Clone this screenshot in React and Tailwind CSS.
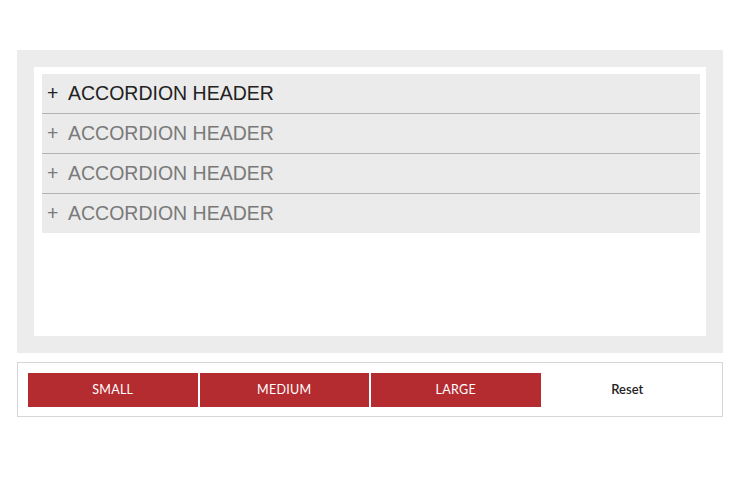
import React, { useState } from "react";

const headers = ["ACCORDION HEADER", "ACCORDION HEADER", "ACCORDION HEADER", "ACCORDION HEADER"];
const sizes = ["SMALL", "MEDIUM", "LARGE"];

const App = () => {
  const [active, setActive] = useState(0);

  return (
    <div className="w-[750px] h-[480px] bg-white pt-[50px] pl-[17px]">
      <div className="w-[706px]">
        {/* accordion frame */}
        <div className="h-[303px] bg-[#ececec] p-[17px]">
          <div className="h-full bg-white pt-[7px] pl-[8px] pr-[6px]">
            <ul>
              {headers.map((h, i) => (
                <li
                  key={i}
                  onClick={() => setActive(i)}
                  className={`flex items-center h-[40px] last:h-[39px] pl-[5px] bg-[#ebebeb] cursor-pointer font-['Liberation_Sans',Arial,sans-serif] text-[19.5px] ${
                    i < headers.length - 1 ? "border-b border-[#b4b4b4]" : ""
                  } ${active === i ? "text-[#222222]" : "text-[#7a7a7a]"}`}
                >
                  <span className="w-[21px]">+</span>
                  <span>{h}</span>
                </li>
              ))}
            </ul>
          </div>
        </div>
        {/* size buttons */}
        <div className="mt-[9px] h-[55px] border border-[#d6d6d6] p-[10px] pb-[9px] grid grid-cols-4 gap-[2px] font-['Lato','Open_Sans',sans-serif]">
          {sizes.map((s) => (
            <button
              key={s}
              className="bg-[#b52c30] text-white text-[12.5px] tracking-[0.3px]"
            >
              {s}
            </button>
          ))}
          <button className="text-[#222222] text-[13px] font-semibold">Reset</button>
        </div>
      </div>
    </div>
  );
};

export default App;
